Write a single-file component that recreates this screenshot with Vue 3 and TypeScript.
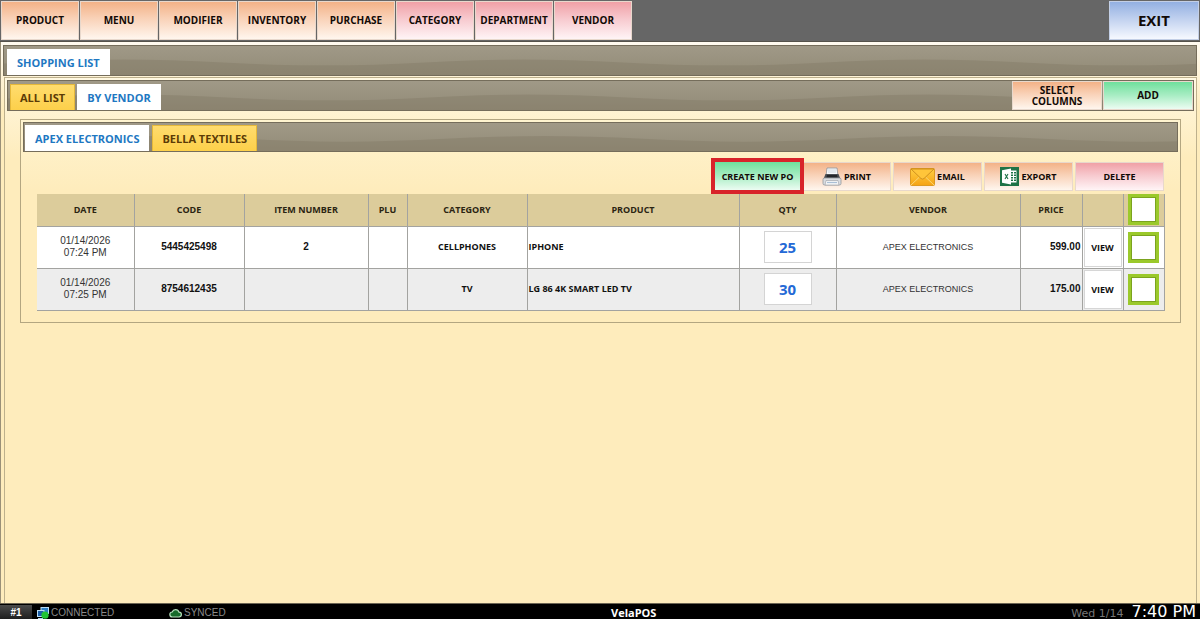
<script setup lang="ts">
import { computed, ref } from 'vue'

interface MenuItem {
  label: string
  tone: 'peach' | 'rose'
}

interface Line {
  id: number
  date: string
  time: string
  code: string
  itemNumber: string
  plu: string
  category: string
  product: string
  qty: string
  vendor: string
  price: string
  picked: boolean
}

const menu: MenuItem[] = [
  { label: 'PRODUCT', tone: 'peach' },
  { label: 'MENU', tone: 'peach' },
  { label: 'MODIFIER', tone: 'peach' },
  { label: 'INVENTORY', tone: 'peach' },
  { label: 'PURCHASE', tone: 'peach' },
  { label: 'CATEGORY', tone: 'rose' },
  { label: 'DEPARTMENT', tone: 'rose' },
  { label: 'VENDOR', tone: 'rose' },
]

const views = ['ALL LIST', 'BY VENDOR']
const activeView = ref('BY VENDOR')

const vendors = ['APEX ELECTRONICS', 'BELLA TEXTILES']
const activeVendor = ref('APEX ELECTRONICS')

const headings = ['DATE', 'CODE', 'ITEM NUMBER', 'PLU', 'CATEGORY', 'PRODUCT', 'QTY', 'VENDOR', 'PRICE']

const lines = ref<Line[]>([
  {
    id: 1, date: '01/14/2026', time: '07:24 PM', code: '5445425498', itemNumber: '2', plu: '',
    category: 'CELLPHONES', product: 'IPHONE', qty: '25', vendor: 'APEX ELECTRONICS', price: '599.00', picked: false,
  },
  {
    id: 2, date: '01/14/2026', time: '07:25 PM', code: '8754612435', itemNumber: '', plu: '',
    category: 'TV', product: 'LG 86 4K SMART LED TV', qty: '30', vendor: 'APEX ELECTRONICS', price: '175.00', picked: false,
  },
])

const allPicked = computed({
  get: () => lines.value.every((line) => line.picked),
  set: (value: boolean) => lines.value.forEach((line) => (line.picked = value)),
})
</script>

<template>
  <div class="app">
    <header class="topbar">
      <nav class="menu" aria-label="Sections">
        <button v-for="item in menu" :key="item.label" type="button" class="btn menu-btn" :class="item.tone">
          {{ item.label }}
        </button>
      </nav>
      <button type="button" class="btn exit sky">EXIT</button>
    </header>

    <main class="page">
      <div class="bar bar-main">
        <button type="button" class="tab active">SHOPPING LIST</button>
      </div>

      <section class="panel">
        <div class="bar bar-view">
          <button
            v-for="view in views"
            :key="view"
            type="button"
            class="tab"
            :class="{ active: view === activeView }"
            @click="activeView = view"
          >
            {{ view }}
          </button>
          <div class="bar-actions">
            <button type="button" class="btn bar-btn peach">SELECT COLUMNS</button>
            <button type="button" class="btn bar-btn mint">ADD</button>
          </div>
        </div>

        <section class="vendor-panel">
          <div class="bar bar-vendor">
            <button
              v-for="vendor in vendors"
              :key="vendor"
              type="button"
              class="tab"
              :class="{ active: vendor === activeVendor }"
              @click="activeVendor = vendor"
            >
              {{ vendor }}
            </button>
          </div>

          <div class="content">
            <div class="actions">
              <button type="button" class="btn action mint marked">CREATE NEW PO</button>
              <button type="button" class="btn action peach">
                <svg width="20" height="20" viewBox="0 0 20 20" aria-hidden="true">
                  <path d="M5 1h10l1 8H4z" fill="#f7f9fb" stroke="#8d9299" stroke-width=".8" />
                  <path d="M6 3h8M6 5h8" stroke="#c5d0dc" stroke-width=".8" />
                  <path d="M3.500 7h13L18.500 12h-17z" fill="#4b4f55" />
                  <path d="M5 8h10l.6 2.500H4.400z" fill="#24272b" />
                  <rect x="1" y="11" width="18" height="7" rx="1.500" fill="#d9dce0" stroke="#92979d" stroke-width=".8" />
                  <path d="M4 13.500h12l1 4.500H3z" fill="#f4f5f6" stroke="#9a9ea4" stroke-width=".6" />
                  <path d="M5 15.500h10" stroke="#a9bfd6" stroke-width="1.200" />
                </svg>
                PRINT
              </button>
              <button type="button" class="btn action peach">
                <svg width="25" height="18" viewBox="0 0 25 18" aria-hidden="true">
                  <defs>
                    <linearGradient id="mail-fill" x1="0" y1="0" x2="0" y2="1">
                      <stop offset="0" stop-color="#ffcf45" />
                      <stop offset="1" stop-color="#f6a313" />
                    </linearGradient>
                  </defs>
                  <rect x=".5" y=".5" width="24" height="17" rx="1" fill="url(#mail-fill)" stroke="#dd9a22" />
                  <path d="M1 17l8.500-8M24 17l-8.500-8" fill="none" stroke="#fbd778" />
                  <path d="M1 1h23L14 10.500q-1.500 1.200-3 0z" fill="#ffc53a" stroke="#c98a1c" stroke-width=".9" />
                </svg>
                EMAIL
              </button>
              <button type="button" class="btn action peach">
                <svg width="19" height="19" viewBox="0 0 19 19" aria-hidden="true">
                  <rect width="19" height="19" fill="#1e7347" />
                  <path d="M10.500 3.500h6v12h-6z" fill="#fff" />
                  <path d="M11 5h2v1.500h-2zM14 5h2v1.500h-2zM11 7.500h2V9h-2zM14 7.500h2V9h-2zM11 10h2v1.500h-2zM14 10h2v1.500h-2zM11 12.500h2V14h-2zM14 12.500h2V14h-2z" fill="#1e7347" />
                  <path d="M2 3.200l9-1.700v16l-9-1.700z" fill="#fff" />
                  <path d="M5 7l3 5M8 7l-3 5" stroke="#1e7347" stroke-width="1.100" />
                </svg>
                EXPORT
              </button>
              <button type="button" class="btn action rose">DELETE</button>
            </div>

            <table class="grid">
              <colgroup>
                <col class="w-date" /><col class="w-code" /><col class="w-item" /><col class="w-plu" />
                <col class="w-category" /><col class="w-product" /><col class="w-qty" /><col class="w-vendor" />
                <col class="w-price" /><col class="w-view" /><col class="w-check" />
              </colgroup>
              <thead>
                <tr>
                  <th v-for="heading in headings" :key="heading" scope="col">{{ heading }}</th>
                  <td></td>
                  <td><input v-model="allPicked" type="checkbox" class="check" aria-label="Select all items" /></td>
                </tr>
              </thead>
              <tbody>
                <tr v-for="line in lines" :key="line.id">
                  <td class="light date">{{ line.date }}<br />{{ line.time }}</td>
                  <td class="figure">{{ line.code }}</td>
                  <td class="figure">{{ line.itemNumber }}</td>
                  <td class="figure">{{ line.plu }}</td>
                  <td>{{ line.category }}</td>
                  <td class="product">{{ line.product }}</td>
                  <td><input v-model="line.qty" type="text" class="qty" :aria-label="'Quantity of ' + line.product" /></td>
                  <td class="light">{{ line.vendor }}</td>
                  <td class="figure price">{{ line.price }}</td>
                  <td class="view-cell"><button type="button" class="view">VIEW</button></td>
                  <td><input v-model="line.picked" type="checkbox" class="check" :aria-label="'Select ' + line.product" /></td>
                </tr>
              </tbody>
            </table>
          </div>
        </section>
      </section>
    </main>

    <footer class="status">
      <span class="station">#1</span>
      <span class="state link">
        <svg width="12" height="12" viewBox="0 0 12 12" aria-hidden="true">
          <rect x="4" y=".5" width="7.500" height="6" fill="#2d7fc4" stroke="#b9dcf5" />
          <rect x=".5" y="3.500" width="6.500" height="6" fill="#1d5fa8" stroke="#b9dcf5" />
          <path d="M1 11.500h5" stroke="#b9dcf5" />
          <circle cx="8" cy="8.200" r="3.600" fill="#21c435" />
        </svg>
        CONNECTED
      </span>
      <span class="state">
        <svg width="13" height="10" viewBox="0 0 13 10" aria-hidden="true">
          <path d="M3.500 9a2.500 2.500 0 0 1-.3-5A3.600 3.600 0 0 1 10 4.200 2.400 2.400 0 0 1 10 9z" fill="#176b2b" stroke="#b5dfbc" stroke-width="1.200" />
        </svg>
        SYNCED
      </span>
      <span class="brand">VelaPOS</span>
      <span class="clock"><span class="day">Wed 1/14</span><span class="time">7:40 PM</span></span>
    </footer>
  </div>
</template>

<style>
body {
  margin: 0;
}
</style>

<style scoped>
.app {
  --label: "Open Sans", "Noto Sans", sans-serif;
  --plain: "Liberation Sans", Arial, sans-serif;
  display: flex;
  flex-direction: column;
  min-height: 100vh;
  background: #feecbc;
  font-family: var(--label);
  color: #111;
}

.app *,
.app {
  box-sizing: border-box;
}

button,
input {
  margin: 0;
  padding: 0;
  font-family: inherit;
  cursor: pointer;
}

.btn {
  display: flex;
  align-items: center;
  justify-content: center;
  border: 1px solid #e8d8cc;
  color: #120a06;
  font-size: 10px;
  font-weight: 700;
  line-height: 11px;
}

.peach {
  background: linear-gradient(#f3b287, #f9d2b8 45%, #fff6ee);
}

.rose {
  background: linear-gradient(#f0a0a6, #f7c9ce 45%, #fff4f6);
}

.sky {
  background: linear-gradient(#93b0e2, #c5d4f0 50%, #f6f9ff);
}

.mint {
  background: linear-gradient(#6fe09c, #a9edc4 50%, #ecfcf2);
}

.topbar {
  display: flex;
  justify-content: space-between;
  height: 42px;
  padding: 1px 1px 2px;
  border-bottom: 1px solid #55524b;
  background: #666;
}

.menu {
  display: flex;
  gap: 1px;
}

.menu-btn {
  width: 78px;
  height: 39px;
}

.exit {
  width: 90px;
  height: 39px;
  border-color: #c3cfe6;
  font-size: 15px;
}

.page {
  display: flex;
  flex: 1;
  flex-direction: column;
  padding: 3px 3px 0 2px;
  border-left: 1px solid #9a9078;
  background: linear-gradient(#fffaf0, #feecbc 70px);
}

.bar {
  display: flex;
  align-items: flex-end;
  border: 1px solid #756d5b;
  background:
    url("data:image/svg+xml,%3Csvg xmlns='http://www.w3.org/2000/svg' width='400' height='30' viewBox='0 0 400 30' preserveAspectRatio='none'%3E%3Cpath d='M0 17C70 13 130 13 200 17S330 21 400 17V30H0z' fill='%23847b67' fill-opacity='.45'/%3E%3C/svg%3E") 20px 0 / 400px 100% repeat-x,
    linear-gradient(#a09987, #928b77);
}

.bar-main {
  height: 31px;
  padding-left: 3px;
}

.bar-view {
  height: 31px;
  padding-left: 2px;
  gap: 2px;
}

.bar-vendor {
  height: 30px;
  padding-left: 1px;
  gap: 3px;
}

.tab {
  height: 26px;
  padding: 0 9px;
  border: 1px solid #e5b83a;
  border-bottom: 0;
  background: linear-gradient(#ffdc6e, #fdd04a);
  color: #5b3b06;
  font-size: 11px;
  font-weight: 700;
  line-height: 24px;
}

.tab.active {
  border-color: #fff;
  background: #fff;
  color: #1e78c2;
}

.bar-actions {
  display: flex;
  align-self: stretch;
  gap: 1px;
  margin-left: auto;
}

.bar-btn {
  width: 90px;
  padding: 0 12px;
}

.panel {
  flex: 1;
  margin: 1px 0 0 1px;
  padding: 2px 2px 0;
  border: 1px solid #bdb08c;
  border-bottom: 0;
  background: linear-gradient(#fff8e2, #feecbc 80px);
}

.vendor-panel {
  margin: 8px 13px 0;
  padding: 2px;
  border: 1px solid #b3a681;
  background: linear-gradient(#fff4d0, #feecbc 70px);
}

.content {
  padding: 10px 14px 9px;
}

.actions {
  display: flex;
  justify-content: flex-end;
  gap: 2px;
}

.action {
  width: 89px;
  height: 29px;
  gap: 2px;
  font-size: 9px;
}

.marked {
  position: relative;
  z-index: 1;
  width: 85px;
  height: 28px;
  border: 0;
  outline: 4px solid #d8232a;
}

.grid {
  width: 100%;
  margin-top: 3px;
  border-collapse: collapse;
  table-layout: fixed;
  font-size: 9px;
  font-weight: 700;
  line-height: 12px;
}

.w-date { width: 97px; }
.w-code { width: 110px; }
.w-item { width: 124px; }
.w-plu { width: 39px; }
.w-category { width: 120px; }
.w-product { width: 212px; }
.w-qty { width: 97px; }
.w-vendor { width: 184px; }
.w-price { width: 62px; }
.w-view { width: 41px; }
.w-check { width: 41px; }

.grid th,
.grid td {
  height: 42px;
  padding: 0;
  border: 1px solid #a3a3a0;
  background: #fff;
  text-align: center;
}

.grid tr > :first-child {
  border-left: 0;
}

.grid thead th,
.grid thead td {
  height: 32px;
  border-top: 0;
  background: #dccc9b;
  color: #2b2412;
}

.grid tbody tr:nth-child(even) td {
  background: #ededed;
}

.grid .light {
  color: #333;
  font-family: var(--plain);
  font-weight: 400;
}

.grid .date {
  font-size: 10px;
}

.grid .figure {
  font-family: var(--plain);
  font-size: 10px;
}

.grid .product {
  padding-left: 1px;
  text-align: left;
}

.grid .price {
  padding-right: 1px;
  text-align: right;
}

.qty {
  display: block;
  width: 48px;
  height: 32px;
  margin: 0 auto;
  border: 1px solid #d4d4d4;
  background: #fff;
  color: #2469d6;
  font-size: 15px;
  font-weight: 700;
  text-align: center;
}

.grid .view-cell {
  padding: 1px;
}

.view {
  display: block;
  width: 100%;
  height: 39px;
  border: 1px solid #d6d6d6;
  background: #fff;
  color: #111;
  font-size: 9px;
  font-weight: 700;
}

.check {
  display: block;
  width: 31px;
  height: 31px;
  margin: 0 auto;
  border: 3px solid #9bc92b;
  outline: 1px solid #7ba31f;
  outline-offset: -4px;
  background: #fff;
  appearance: none;
}

.check:checked {
  background: #9bc92b;
}

.status {
  display: grid;
  grid-template-columns: 32px 132px 12fr 88px 11fr 132px;
  align-items: center;
  height: 16px;
  border-top: 1px solid #6b6453;
  background: #000;
  color: #8b8b8b;
  font-family: var(--plain);
  font-size: 10px;
  line-height: 15px;
}

.station {
  background: linear-gradient(#4a4a4a, #1c1c1c);
  color: #fff;
  font-weight: 700;
  text-align: center;
}

.state {
  display: flex;
  align-items: center;
  gap: 2px;
  padding-left: 5px;
}

.brand {
  color: #fff;
  font-family: var(--label);
  font-size: 11px;
  font-weight: 700;
  text-align: center;
}

.clock {
  display: flex;
  grid-column: 6;
  align-items: baseline;
  justify-content: flex-end;
  gap: 8px;
  padding-right: 4px;
  font-family: "DejaVu Sans", sans-serif;
}

.day {
  color: #777;
  font-size: 11px;
}

.time {
  color: #fff;
  font-size: 16px;
}
</style>
